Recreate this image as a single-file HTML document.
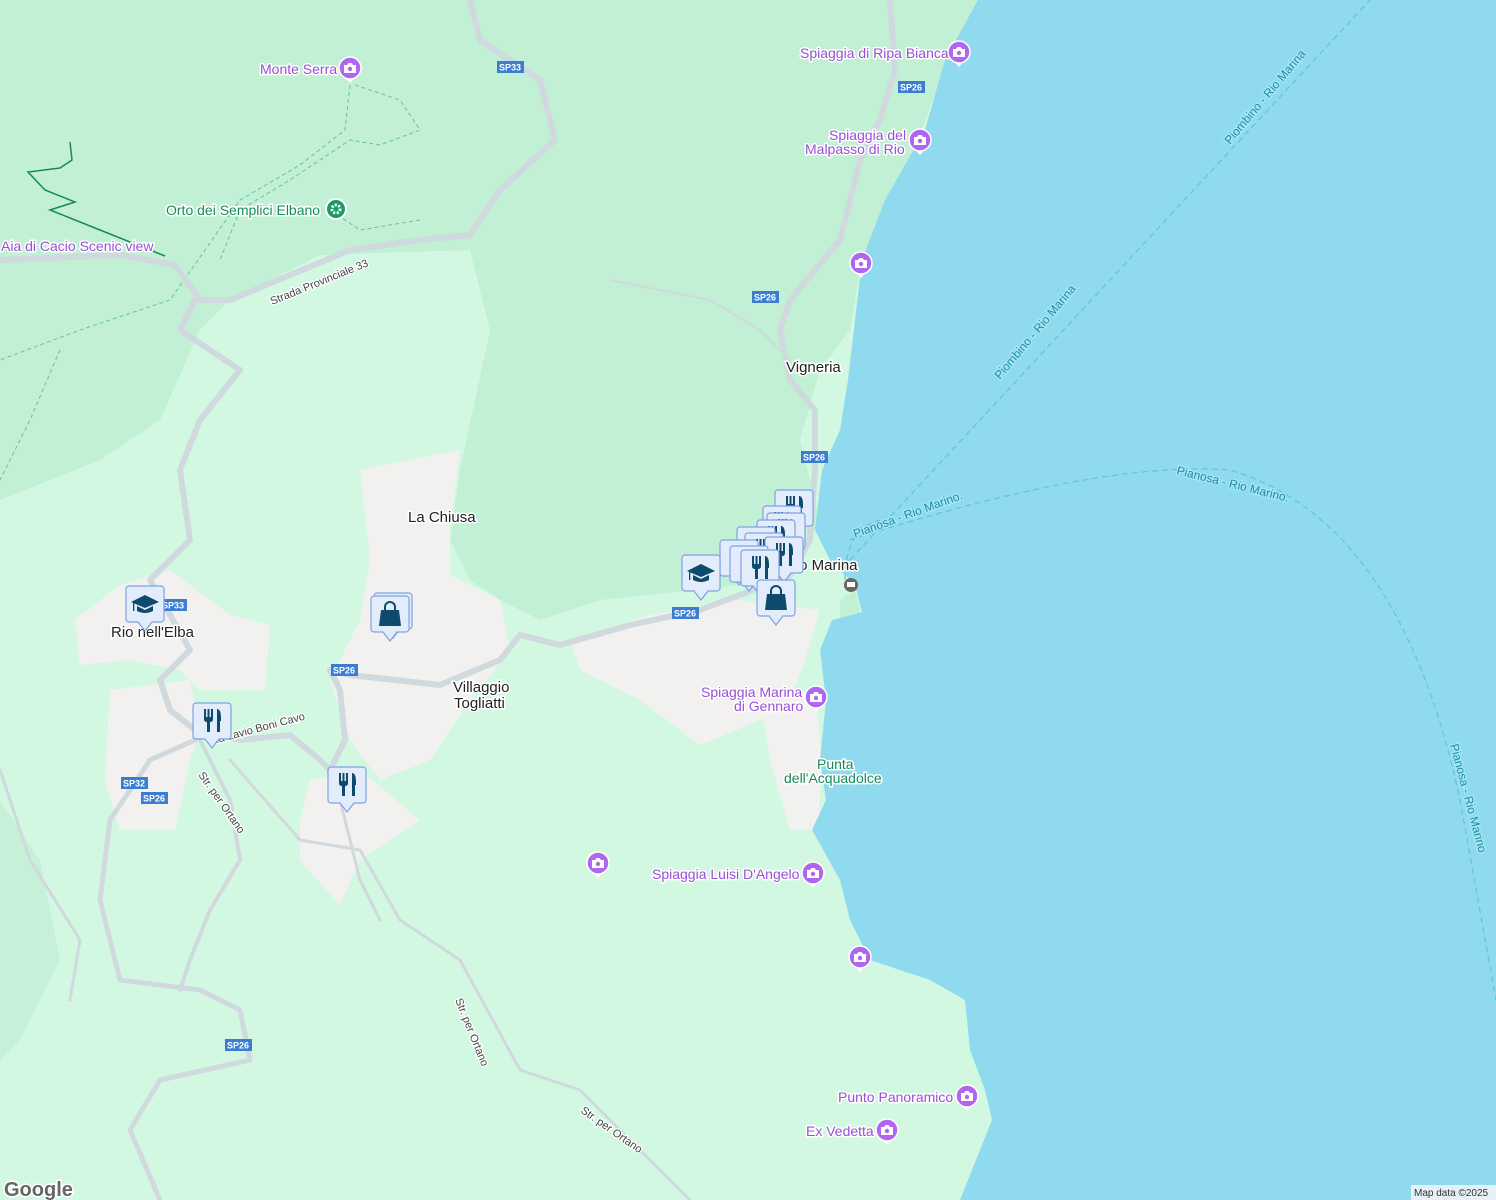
<!DOCTYPE html>
<html><head><meta charset="utf-8"><style>
html,body{margin:0;padding:0;overflow:hidden;background:#d3f8e2}
svg{display:block}
text{font-family:"Liberation Sans",sans-serif}
.poi{fill:#9a4fd6;font-size:14px;paint-order:stroke;stroke:#fff;stroke-width:3px;stroke-linejoin:round}
.town{fill:#222;font-size:15px;paint-order:stroke;stroke:#fff;stroke-width:3px}
.grn{fill:#188a5a;font-size:14px;paint-order:stroke;stroke:#fff;stroke-width:3px}
.road{fill:#444;font-size:11px;paint-order:stroke;stroke:#fff;stroke-width:2.5px}
.ferry{fill:#1a8ea8;font-size:12px;paint-order:stroke;stroke:#a8e6f4;stroke-width:2.5px}
.sp{fill:#fff;font-size:9px;font-weight:bold}
</style></head><body>
<svg width="1496" height="1200" viewBox="0 0 1496 1200" xmlns="http://www.w3.org/2000/svg">
<defs>
<g id="box"><path d="M3 0h32a3 3 0 0 1 3 3v30a3 3 0 0 1-3 3h-9l-7 9-7-9h-9a3 3 0 0 1-3-3V3a3 3 0 0 1 3-3z" fill="#e3ecfb" stroke="#7da2e2" stroke-width="1.2"/></g>
<g id="rest"><use href="#box"/><g fill="#0d4a6c"><rect x="11" y="6" width="2" height="9"/><rect x="14.5" y="6" width="2" height="9"/><rect x="18" y="6" width="2" height="9"/><path d="M11 14h9v2q0 3-3 3v10h-3V19q-3 0-3-3z"/><path d="M24 6q4 0 4 9v3h-1v11h-3z"/></g></g>
<g id="school"><use href="#box"/><g fill="#0d4a6c"><path d="M5 16l14-7 14 7-14 6z"/><path d="M11 20v5q8 4 16 0v-5l-8 4z"/><rect x="7" y="17" width="1.3" height="8"/></g></g>
<g id="shop"><use href="#box"/><g fill="#0d4a6c"><path d="M10 14h18l2 16H8z"/><path d="M14 15v-4a5 5 0 0 1 10 0v4" fill="none" stroke="#0d4a6c" stroke-width="2"/></g></g>
<g id="cam"><path d="M-5 9L0 15 5 9z" fill="#fff"/><circle r="11" fill="#b066ee" stroke="#fff" stroke-width="1.5"/><path d="M-6-3h3l1.5-2h3l1.5 2h3v8h-12z" fill="#fff"/><circle cy="1" r="2.2" fill="#b066ee"/></g>
</defs>
<rect width="1496" height="1200" fill="#d3f8e2"/>
<path d="M0 0H980L940 80 900 190 860 270 850 330 820 370 800 440 820 520 790 580 600 600 540 620 500 600 470 580 450 540 460 470 490 330 470 250 320 255 230 300 200 330 160 420 100 460 0 500z" fill="#c1f0d5"/>
<path d="M0 800 40 860 60 960 20 1040 0 1060z" fill="#c6f1d8"/>
<g fill="#f3f1f0">
<path d="M75 620 120 585 170 570 230 615 270 625 265 690 200 690 180 670 130 660 80 665z"/>
<path d="M110 690 190 680 200 730 190 760 175 830 120 830 105 780z"/>
<path d="M360 470 460 450 450 530 450 575 500 600 510 650 470 700 430 760 380 780 350 740 330 680 360 620 370 560z"/>
<path d="M570 640 650 615 740 600 820 610 805 660 790 700 760 720 700 745 640 700 580 670z"/>
<path d="M760 700 815 690 822 760 818 830 790 830 770 760z"/>
<path d="M310 780 360 770 420 820 360 860 340 905 300 860 300 820z"/>
</g>
<path d="M978 0 945 60 925 130 885 200 862 260 855 320 848 380 840 430 822 470 815 530 830 560 855 585 862 612 832 620 820 650 826 700 820 760 826 800 812 830 840 880 850 920 870 960 930 980 965 1000 970 1050 985 1090 992 1120 960 1200H1496V0z" fill="#8fdaee"/>
<path d="M840 600 855 590 860 612 840 618z" fill="#c1f0d5"/>
<g fill="none" stroke="#5fc4e0" stroke-width="1.2" stroke-dasharray="6 4">
<path d="M850 560 1370 0"/>
<path d="M850 540Q1100 460 1230 470Q1400 520 1460 800L1496 1000"/>
<path d="M845 580Q845 530 880 520"/>
</g>
<g fill="none" stroke="#67c29a" stroke-width="1" stroke-dasharray="4 3">
<path d="M350 85 345 130 300 165 240 200 170 300 80 330 0 360"/>
<path d="M355 85 400 100 420 130 380 145 350 140 290 180 240 210 220 260"/>
<path d="M290 215 330 210 360 230 420 220"/>
<path d="M60 350 30 420 0 480"/>
</g>
<path d="M70 142 72 160 60 168 28 172 45 190 75 202 50 210 100 230 165 256" fill="none" stroke="#178a5a" stroke-width="1.5"/>
<g fill="none" stroke="#cfd9de" stroke-linecap="round" stroke-linejoin="round">
<path stroke-width="6" d="M470 0 480 40 540 80 555 140 500 190 470 235 420 240 350 250 230 300 200 300 175 265 120 255 0 260"/>
<path stroke-width="6" d="M195 300 180 330 240 370 200 420 180 470 190 540 150 580 190 650 160 680 170 710 195 730 240 740 290 735 320 760 330 770"/>
<path stroke-width="6" d="M330 770 345 740 340 690 330 670 350 675 440 685 500 660 520 635 560 645 630 625 700 610 740 595 790 575 810 540 815 470 815 410 790 380 780 330 790 300 815 270 840 240 850 200 860 160 880 120 895 70 890 0"/>
<path stroke-width="5" d="M195 740 150 760 110 820 100 900 120 980 200 990 240 1010 250 1060 160 1080 130 1130 160 1200"/>
<path stroke-width="4" d="M200 740 230 800 240 860 210 910 190 960 180 990"/>
<path stroke-width="3" d="M230 760 300 840 360 850 400 920 460 960 520 1070 580 1090 640 1150 690 1200"/>
<path stroke-width="3" d="M340 800 360 880 380 920"/>
<path stroke-width="3" d="M0 770 30 860 80 940 70 1000"/>
<path stroke-width="2" d="M610 280 710 300 760 330 790 360"/>
</g>
<g>
<rect x="497" y="61" width="27" height="12" fill="#3c7dd0"/><text class="sp" x="499" y="70.5">SP33</text>
<rect x="898" y="81" width="27" height="12" fill="#3c7dd0"/><text class="sp" x="900" y="90.5">SP26</text>
<rect x="752" y="291" width="27" height="12" fill="#3c7dd0"/><text class="sp" x="754" y="300.5">SP26</text>
<rect x="801" y="451" width="27" height="12" fill="#3c7dd0"/><text class="sp" x="803" y="460.5">SP26</text>
<rect x="672" y="607" width="27" height="12" fill="#3c7dd0"/><text class="sp" x="674" y="616.5">SP26</text>
<rect x="160" y="599" width="27" height="12" fill="#3c7dd0"/><text class="sp" x="162" y="608.5">SP33</text>
<rect x="331" y="664" width="27" height="12" fill="#3c7dd0"/><text class="sp" x="333" y="673.5">SP26</text>
<rect x="121" y="777" width="27" height="12" fill="#3c7dd0"/><text class="sp" x="123" y="786.5">SP32</text>
<rect x="141" y="792" width="27" height="12" fill="#3c7dd0"/><text class="sp" x="143" y="801.5">SP26</text>
<rect x="225" y="1039" width="27" height="12" fill="#3c7dd0"/><text class="sp" x="227" y="1048.5">SP26</text>
</g>
<text class="road" transform="translate(272,305) rotate(-22)">Strada Provinciale 33</text>
<text class="road" transform="translate(210,745) rotate(-15)">Via Lavio Boni Cavo</text>
<text class="road" transform="translate(198,775) rotate(55)">Str. per Ortano</text>
<text class="road" transform="translate(455,1000) rotate(68)">Str. per Ortano</text>
<text class="road" transform="translate(580,1112) rotate(35)">Str. per Ortano</text>
<text class="ferry" transform="translate(1230,145) rotate(-50)">Piombino - Rio Marina</text>
<text class="ferry" transform="translate(1000,380) rotate(-50)">Piombino - Rio Marina</text>
<text class="ferry" transform="translate(855,538) rotate(-20)">Pianosa - Rio Marino.</text>
<text class="ferry" transform="translate(1176,474) rotate(14)">Pianosa - Rio Marino.</text>
<text class="ferry" transform="translate(1450,745) rotate(75)">Pianosa - Rio Marino</text>
<text class="town" x="786" y="372">Vigneria</text>
<text class="town" x="408" y="522">La Chiusa</text>
<text class="town" x="111" y="637">Rio nell'Elba</text>
<text class="town" x="453" y="692">Villaggio</text>
<text class="town" x="454" y="708">Togliatti</text>
<text class="town" x="785" y="570">Rio Marina</text>
<text class="poi" x="260" y="74">Monte Serra</text>
<text class="poi" x="800" y="58">Spiaggia di Ripa Bianca</text>
<text class="poi" x="829" y="140">Spiaggia del</text>
<text class="poi" x="805" y="154">Malpasso di Rio</text>
<text class="poi" x="701" y="697">Spiaggia Marina</text>
<text class="poi" x="734" y="711">di Gennaro</text>
<text class="poi" x="652" y="879">Spiaggia Luisi D'Angelo</text>
<text class="poi" x="838" y="1102">Punto Panoramico</text>
<text class="poi" x="806" y="1136">Ex Vedetta</text>
<text class="poi" x="1" y="251">Aia di Cacio Scenic view</text>
<text class="grn" x="166" y="215">Orto dei Semplici Elbano</text>
<text class="grn" x="817" y="769">Punta</text>
<text class="grn" x="784" y="783">dell'Acquadolce</text>
<use href="#cam" x="350" y="68"/><use href="#cam" x="959" y="52"/><use href="#cam" x="920" y="140"/><use href="#cam" x="861" y="263"/>
<use href="#cam" x="816" y="697"/><use href="#cam" x="598" y="863"/><use href="#cam" x="813" y="873"/><use href="#cam" x="860" y="957"/>
<use href="#cam" x="967" y="1096"/><use href="#cam" x="887" y="1130"/>
<circle cx="336" cy="209" r="10" fill="#1a9a68" stroke="#fff" stroke-width="2"/><circle cx="336" cy="209" r="4" fill="none" stroke="#fff" stroke-width="3" stroke-dasharray="2 1.5"/>
<circle cx="851" cy="585" r="7" fill="#666"/><rect x="847" y="582" width="8" height="5" fill="#fff"/>
<use href="#rest" x="775" y="490"/><use href="#rest" x="763" y="506"/><use href="#rest" x="767" y="513"/><use href="#rest" x="757" y="520"/>
<use href="#rest" x="737" y="527"/><use href="#rest" x="745" y="533"/><use href="#rest" x="720" y="540"/><use href="#rest" x="765" y="537"/>
<use href="#rest" x="730" y="546"/><use href="#rest" x="741" y="550"/>
<use href="#school" x="682" y="555"/><use href="#school" x="126" y="586"/>
<use href="#shop" x="757" y="580"/><use href="#shop" x="374" y="593"/><use href="#shop" x="371" y="596"/>
<use href="#rest" x="193" y="703"/><use href="#rest" x="328" y="767"/>
<text x="4" y="1196" style="font-size:20px;font-weight:bold;fill:#666;paint-order:stroke;stroke:#fff;stroke-width:3px">Google</text>
<rect x="1411" y="1185" width="85" height="15" fill="#f5f5f5" opacity="0.85"/>
<text x="1414" y="1196" style="font-size:10px;fill:#333">Map data ©2025</text>
</svg>
</body></html>
